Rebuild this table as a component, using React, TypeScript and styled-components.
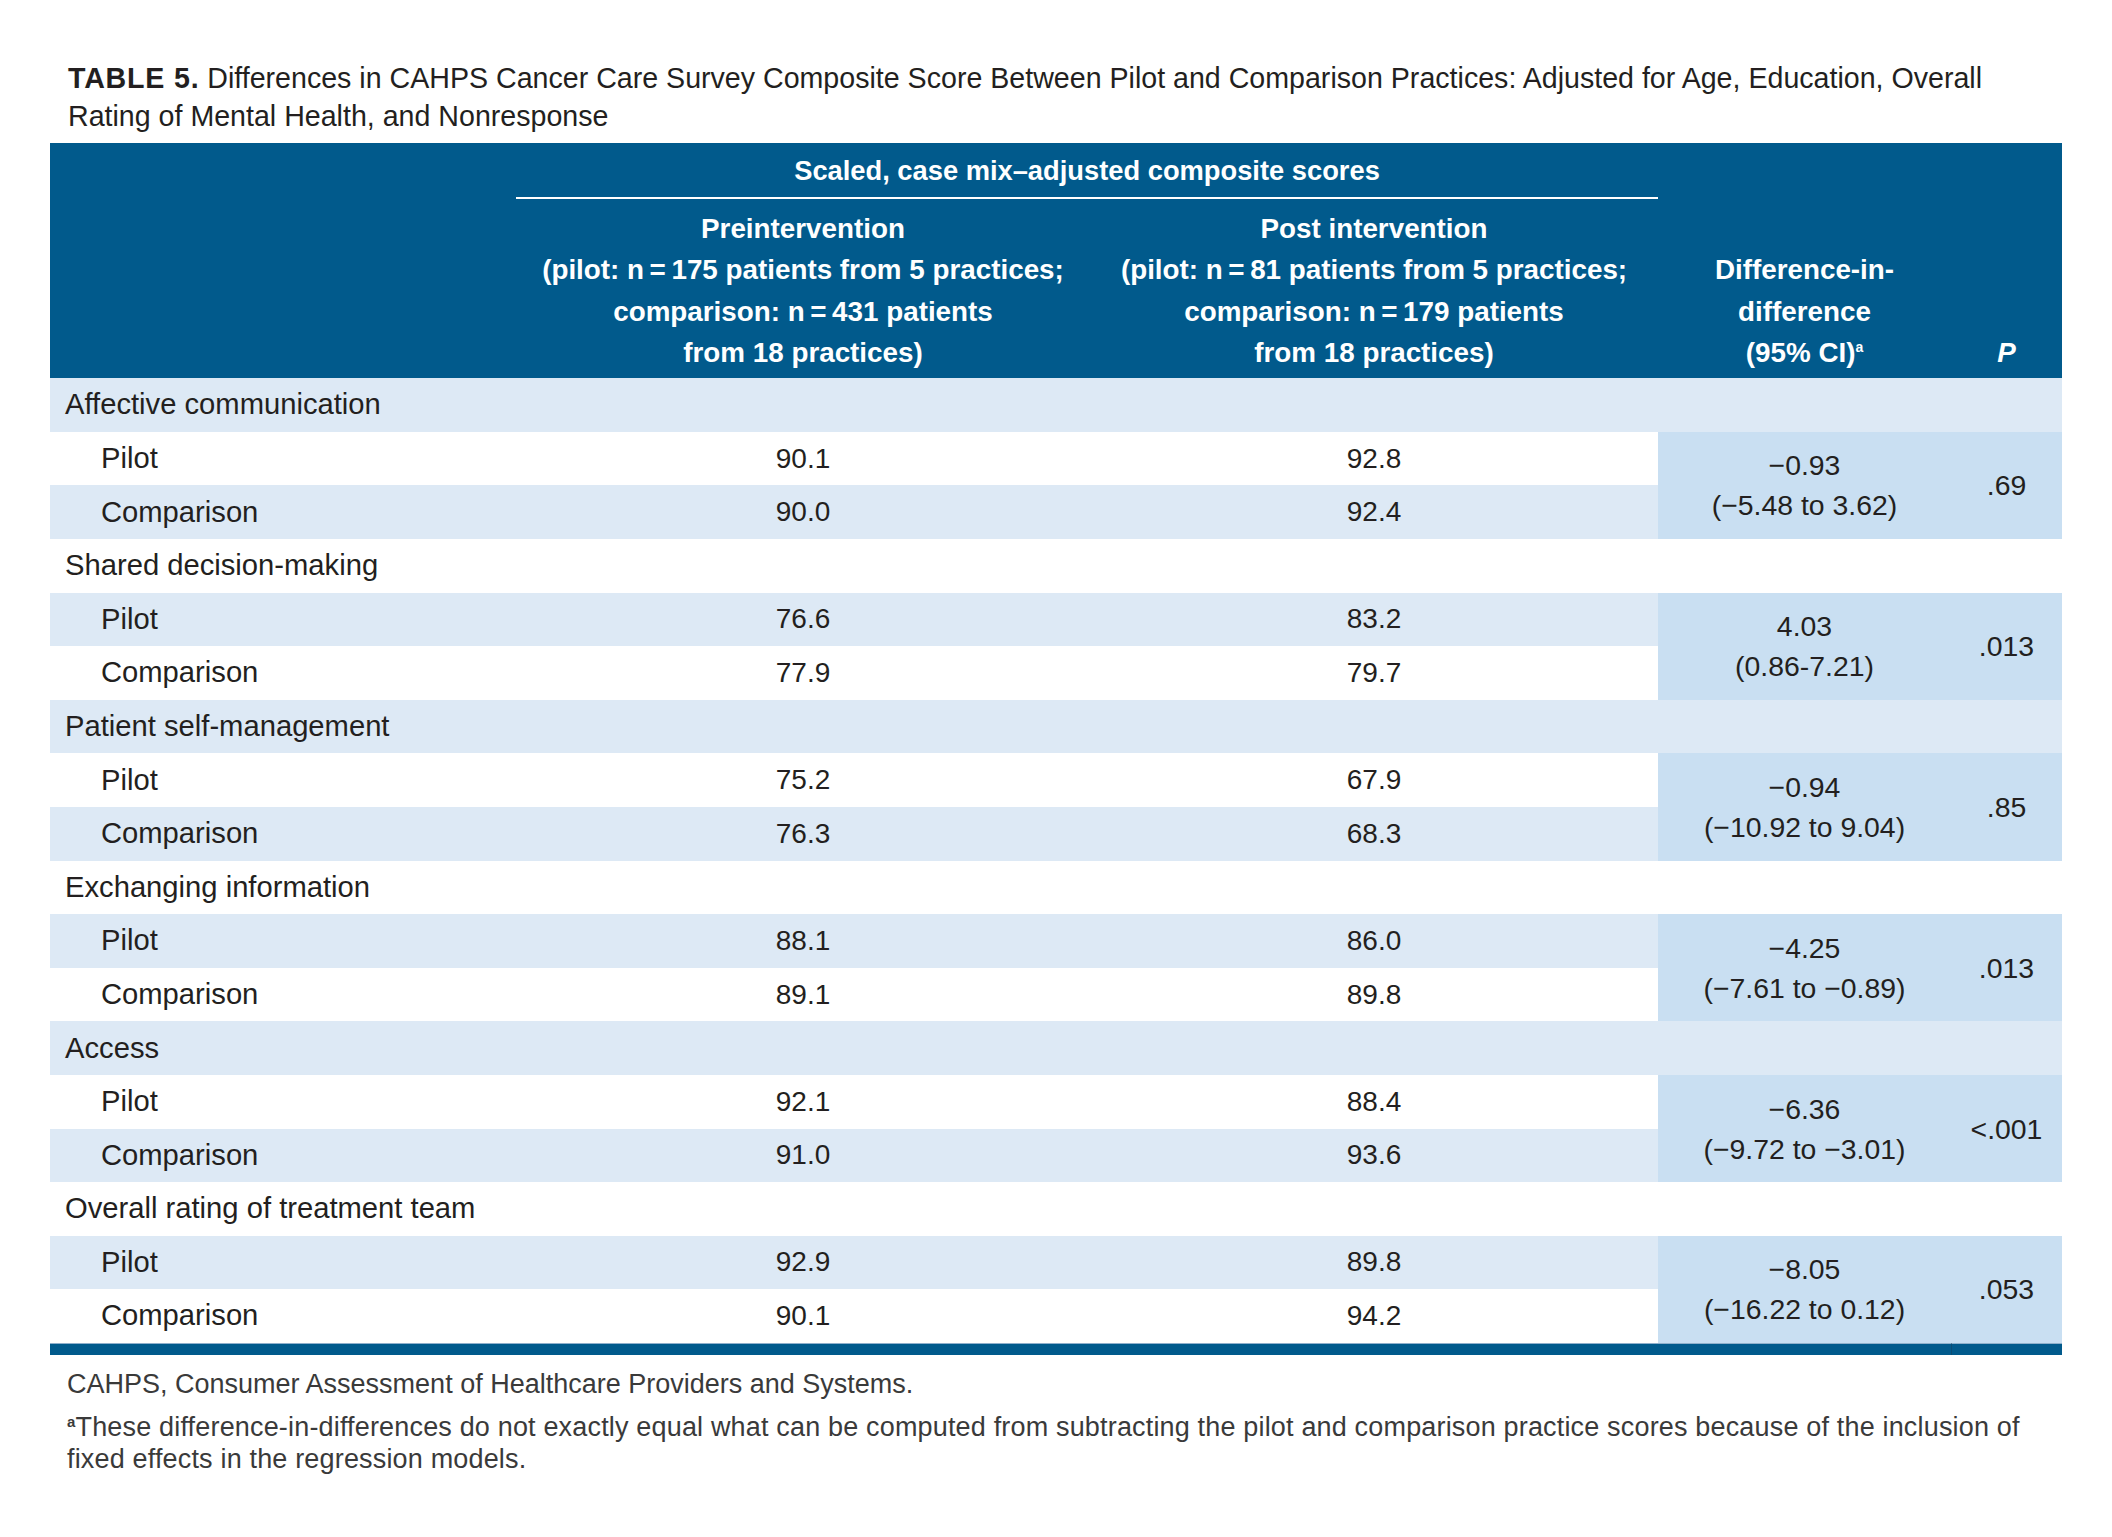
import { FC } from "react"
import styled, { createGlobalStyle } from "styled-components"

const GlobalStyle = createGlobalStyle`
  body {
    margin: 0;
    background: #fff;
    font-family: "Liberation Sans", Arial, sans-serif;
    color: #231f20;
  }
`

type GroupType = {
  name: string
  pilot: [string, string]
  comparison: [string, string]
  diff: string
  ci: string
  p: string
}

const groups: GroupType[] = [
  { name: "Affective communication", pilot: ["90.1", "92.8"], comparison: ["90.0", "92.4"], diff: "−0.93", ci: "(−5.48 to 3.62)", p: ".69" },
  { name: "Shared decision-making", pilot: ["76.6", "83.2"], comparison: ["77.9", "79.7"], diff: "4.03", ci: "(0.86-7.21)", p: ".013" },
  { name: "Patient self-management", pilot: ["75.2", "67.9"], comparison: ["76.3", "68.3"], diff: "−0.94", ci: "(−10.92 to 9.04)", p: ".85" },
  { name: "Exchanging information", pilot: ["88.1", "86.0"], comparison: ["89.1", "89.8"], diff: "−4.25", ci: "(−7.61 to −0.89)", p: ".013" },
  { name: "Access", pilot: ["92.1", "88.4"], comparison: ["91.0", "93.6"], diff: "−6.36", ci: "(−9.72 to −3.01)", p: "<.001" },
  { name: "Overall rating of treatment team", pilot: ["92.9", "89.8"], comparison: ["90.1", "94.2"], diff: "−8.05", ci: "(−16.22 to 0.12)", p: ".053" },
]

const App: FC = () => {
  return (
    <>
      <GlobalStyle />
      <Page>
        <Title>
          <TableNo>TABLE 5.</TableNo> Differences in CAHPS Cancer Care Survey Composite Score Between Pilot and
          Comparison Practices: Adjusted for Age, Education, Overall
          <br />
          Rating of Mental Health, and Nonresponse
        </Title>

        <Table>
          <colgroup>
            <col style={{ width: 466 }} />
            <col style={{ width: 574 }} />
            <col style={{ width: 568 }} />
            <col style={{ width: 293 }} />
            <col style={{ width: 111 }} />
          </colgroup>
          <thead>
            <tr>
              <HeadCell rowSpan={2} />
              <SpanHead colSpan={2}>Scaled, case mix–adjusted composite scores</SpanHead>
              <HeadCell rowSpan={2}>
                Difference-in-
                <br />
                difference
                <br />
                (95% CI)<Sup>a</Sup>
              </HeadCell>
              <HeadCell rowSpan={2}>
                <i>P</i>
              </HeadCell>
            </tr>
            <tr>
              <HeadCell>
                Preintervention
                <br />
                (pilot: n{"\u2009=\u2009"}175 patients from 5 practices;
                <br />
                comparison: n{"\u2009=\u2009"}431 patients
                <br />
                from 18 practices)
              </HeadCell>
              <HeadCell>
                Post intervention
                <br />
                (pilot: n{"\u2009=\u2009"}81 patients from 5 practices;
                <br />
                comparison: n{"\u2009=\u2009"}179 patients
                <br />
                from 18 practices)
              </HeadCell>
            </tr>
          </thead>
          <tbody>
            {groups.map((g, i) => {
              const base = i * 3
              return [
                <Row key={g.name} $Shaded={base % 2 === 0}>
                  <GroupLabel colSpan={5}>{g.name}</GroupLabel>
                </Row>,
                <Row key={g.name + "-pilot"} $Shaded={(base + 1) % 2 === 0}>
                  <SubLabel>Pilot</SubLabel>
                  <NumCell>{g.pilot[0]}</NumCell>
                  <NumCell>{g.pilot[1]}</NumCell>
                  <MergedCell rowSpan={2}>
                    <DiffLine>{g.diff}</DiffLine>
                    <DiffLine>{g.ci}</DiffLine>
                  </MergedCell>
                  <MergedCell rowSpan={2}>{g.p}</MergedCell>
                </Row>,
                <Row key={g.name + "-comp"} $Shaded={(base + 2) % 2 === 0}>
                  <SubLabel>Comparison</SubLabel>
                  <NumCell>{g.comparison[0]}</NumCell>
                  <NumCell>{g.comparison[1]}</NumCell>
                </Row>,
              ]
            })}
          </tbody>
          <tfoot>
            <tr>
              <BarCell colSpan={4} />
              <BarCell $Divider />
            </tr>
          </tfoot>
        </Table>

        <Notes>
          <Note>CAHPS, Consumer Assessment of Healthcare Providers and Systems.</Note>
          <Note $Spread>
            <NoteSup>a</NoteSup>These difference-in-differences do not exactly equal what can be computed from
            subtracting the pilot and comparison practice scores because of the inclusion of
            <br />
            fixed effects in the regression models.
          </Note>
        </Notes>
      </Page>
    </>
  )
}

export default App

const Page = styled.div`
  width: 2012px;
  padding: 59px 50px 40px 50px;
`

const Title = styled.div`
  padding-left: 18px;
  margin-bottom: 8px;
  font-size: 28.6px;
  line-height: 38px;
  color: #231f20;
  white-space: nowrap;
`
const TableNo = styled.span`
  font-weight: 900;
  letter-spacing: 0.8px;
`

const Table = styled.table`
  width: 2012px;
  table-layout: fixed;
  border-collapse: separate;
  border-spacing: 0;
  font-size: 28.4px;
`

const HeadCell = styled.th`
  background: #015a8c;
  color: #fff;
  font-weight: 700;
  font-size: 27.8px;
  line-height: 41.3px;
  text-align: center;
  vertical-align: bottom;
  padding: 9px 0 5px 0;
  white-space: nowrap;
`
const SpanHead = styled(HeadCell)`
  vertical-align: middle;
  font-size: 27.3px;
  line-height: 40px;
  padding: 8px 0 6px 0;
  border-bottom: 2px solid #fff;
`
const Sup = styled.sup`
  font-size: 14px;
  vertical-align: 10px;
  line-height: 0;
`

const Row = styled.tr<{ $Shaded: boolean }>`
  height: 53.6px;
  background: ${({ $Shaded }) => ($Shaded ? "#dde9f5" : "#fff")};
`
const GroupLabel = styled.td`
  padding: 0 0 0 15px;
  font-size: 29.2px;
  line-height: 1;
  white-space: nowrap;
`
const SubLabel = styled.td`
  padding: 0 0 0 51px;
  font-size: 29.2px;
  line-height: 1;
`
const NumCell = styled.td`
  text-align: center;
  padding: 0;
  font-size: 28px;
  line-height: 1;
`
const MergedCell = styled.td`
  background: #c9dff2;
  text-align: center;
  vertical-align: middle;
  padding: 0;
  line-height: 40px;
  white-space: nowrap;
`
const DiffLine = styled.div`
  line-height: 40px;
`

const BarCell = styled.td<{ $Divider?: boolean }>`
  height: 11px;
  padding: 0;
  background: #015a8c;
  border-top: 1px solid #8fb0cc;
  border-left: ${({ $Divider }) => ($Divider ? "1px solid #0b4c75" : "none")};
`

const Notes = styled.div`
  padding: 13px 0 0 17px;
  color: #3a3a3a;
  font-size: 27px;
`
const Note = styled.div<{ $Spread?: boolean }>`
  line-height: 32px;
  margin-bottom: 11px;
  white-space: nowrap;
  letter-spacing: ${({ $Spread }) => ($Spread ? "0.17px" : "0")};
`
const NoteSup = styled.sup`
  font-size: 15px;
  font-weight: 700;
  vertical-align: 9px;
  line-height: 0;
`
